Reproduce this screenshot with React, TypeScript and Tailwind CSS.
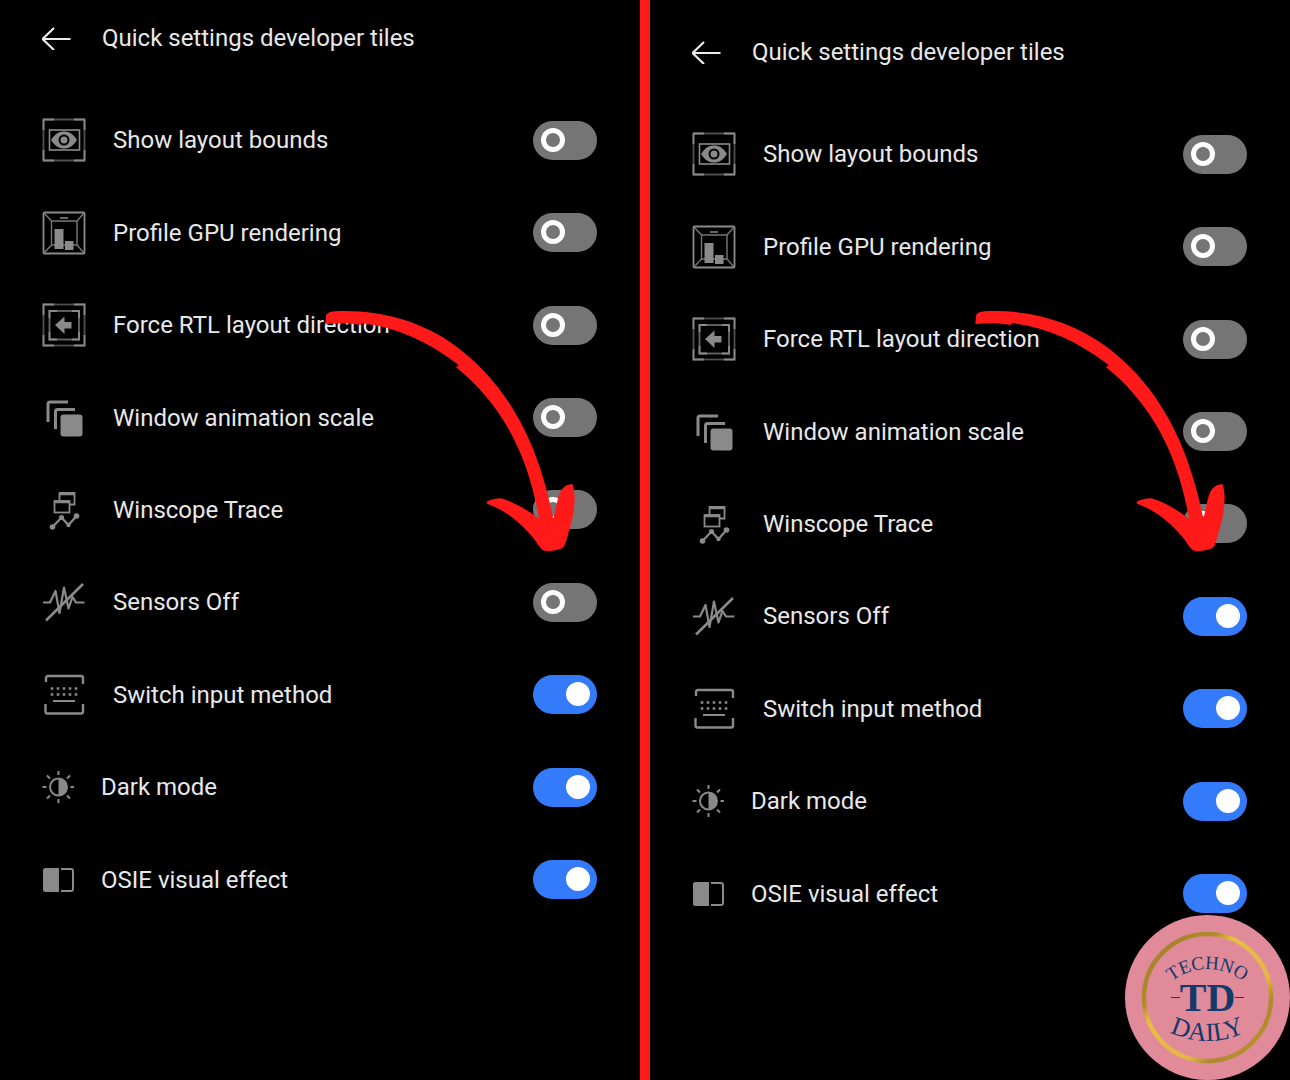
import { useId, useState } from 'react'
import type { ReactNode } from 'react'

type Tile = {
  label: string
  icon: ReactNode
  on?: boolean
}

function LayoutBoundsIcon() {
  return (
    <svg width="44" height="44" viewBox="0 0 44 44" fill="none" stroke="#8a8a8a" aria-hidden="true">
      <rect x="1.5" y="1.5" width="41" height="41" rx="1" stroke="#4f4f4f" strokeWidth="1.8" />
      <path d="M1.5 12V1.5H12M32 1.5h10.5V12M42.5 32v10.5H32M12 42.5H1.5V32" strokeWidth="1.8" />
      <rect x="7.5" y="12" width="30" height="20" strokeWidth="1.6" />
      <path d="M9 22c3.5-6 8-8.5 13-8.5s9.5 2.5 13 8.5c-3.5 6-8 8.5-13 8.5s-9.5-2.5-13-8.5z" fill="#8a8a8a" stroke="none" />
      <circle cx="22" cy="22" r="4.5" stroke="#000" strokeWidth="2" />
    </svg>
  )
}

function GpuIcon() {
  return (
    <svg width="44" height="44" viewBox="0 0 44 44" fill="none" stroke="#8a8a8a" aria-hidden="true">
      <rect x="1.5" y="1.5" width="41" height="41" rx="1" strokeWidth="1.8" />
      <path d="M9.5 34V10h25.5v24H9.5M2 2l7.5 8M42 2l-7 8M2 42l7.5-8M42 42l-7-8" stroke="#777" strokeWidth="1.4" />
      <path d="M18 7h8" stroke="#666" strokeWidth="2" />
      <path d="M12.5 18h9v20h-9zM23 30h8.5v9H23z" fill="#8a8a8a" stroke="none" />
    </svg>
  )
}

function RtlIcon() {
  return (
    <svg width="44" height="44" viewBox="0 0 44 44" fill="none" stroke="#8a8a8a" aria-hidden="true">
      <rect x="1.5" y="1.5" width="41" height="41" stroke="#4f4f4f" strokeWidth="1.8" />
      <path d="M1.5 12V1.5H12M32 1.5h10.5V12M42.5 32v10.5H32M12 42.5H1.5V32" strokeWidth="1.8" />
      <rect x="7.5" y="8" width="29.5" height="28.5" stroke="#666" strokeWidth="1.8" />
      <path d="M7.5 15V8H15M30 8h7v7M37 29v7.5h-7M15 36.5H7.5V29" strokeWidth="1.8" />
      <path d="M13 22l9.5-8.5V19h7v6.5h-7V31z" fill="#8a8a8a" stroke="none" />
    </svg>
  )
}

function WindowsIcon() {
  return (
    <svg width="44" height="44" viewBox="0 0 44 44" fill="none" stroke="#8a8a8a" strokeWidth="3" aria-hidden="true">
      <path d="M6 26V8a2 2 0 0 1 2-2h18M13.5 33V15.5a2 2 0 0 1 2-2h17.5" />
      <rect x="18.5" y="18.5" width="22" height="22" rx="3" fill="#8a8a8a" stroke="none" />
    </svg>
  )
}

function WinscopeIcon() {
  return (
    <svg width="44" height="44" viewBox="0 0 44 44" fill="none" stroke="#8a8a8a" strokeWidth="1.8" aria-hidden="true">
      <path d="M17.5 12V5h15v11.5H28" />
      <path d="M17.5 6h15M12.5 14h15" strokeWidth="2.6" />
      <rect x="12.5" y="13" width="15" height="11.5" />
      <path d="M10.5 39l9-9.5 7 7.5 8-9" strokeWidth="2.2" />
      <g fill="#8a8a8a" stroke="none">
        <circle cx="10.5" cy="39" r="2.8" />
        <circle cx="19.5" cy="29.5" r="2.6" />
        <circle cx="26.5" cy="37" r="2.2" />
        <circle cx="34.5" cy="28" r="2.8" />
      </g>
    </svg>
  )
}

function SensorsIcon() {
  return (
    <svg
      width="44"
      height="44"
      viewBox="0 0 44 44"
      fill="none"
      stroke="#8a8a8a"
      strokeWidth="2.2"
      strokeLinejoin="round"
      aria-hidden="true"
    >
      <path d="M1 22.5h7L13.5 11l4 22 4.5-25.5 4.5 21L30.5 17l3.5 5.5h8.5" />
      <path d="M4 40.5L41 4" strokeWidth="2.6" />
    </svg>
  )
}

function KeyboardIcon() {
  return (
    <svg width="44" height="44" viewBox="0 0 44 44" fill="none" stroke="#8a8a8a" strokeWidth="2.4" aria-hidden="true">
      <path d="M4 9V5a2 2 0 0 1 2-2h33a2 2 0 0 1 2 2v6M3.5 31v7.5a2 2 0 0 0 2 2h33.5a2 2 0 0 0 2-2V31" />
      <path d="M8.7 15.5h27M8.7 21.5h27" strokeWidth="2.6" strokeDasharray="2.6 3.4" />
      <path d="M11 28h22" strokeWidth="2" />
    </svg>
  )
}

function DarkModeIcon() {
  return (
    <svg width="32" height="32" viewBox="0 0 32 32" fill="none" stroke="#8a8a8a" strokeWidth="2" aria-hidden="true">
      <circle cx="16.5" cy="16" r="8.5" />
      <path d="M16.5 7.5a8.5 8.5 0 0 1 0 17z" fill="#8a8a8a" stroke="none" />
      <path d="M16.5 0v4M16.5 28v4M0.5 16h4M28.5 16h3.5M5 4.5l3 3M25 24.5l3 3M5 27.5l3-3M25 7.5l3-3" />
    </svg>
  )
}

function OsieIcon() {
  return (
    <svg width="32" height="32" viewBox="0 0 32 32" fill="none" aria-hidden="true">
      <path d="M3.5 4h13.5v24H3.5A2.5 2.5 0 0 1 1 25.5v-19A2.5 2.5 0 0 1 3.5 4z" fill="#8a8a8a" />
      <path d="M19 5h10a2 2 0 0 1 2 2v18a2 2 0 0 1-2 2H19" stroke="#8a8a8a" strokeWidth="2" />
    </svg>
  )
}

const tiles: Tile[] = [
  { label: 'Show layout bounds', icon: <LayoutBoundsIcon /> },
  { label: 'Profile GPU rendering', icon: <GpuIcon /> },
  { label: 'Force RTL layout direction', icon: <RtlIcon /> },
  { label: 'Window animation scale', icon: <WindowsIcon /> },
  { label: 'Winscope Trace', icon: <WinscopeIcon /> },
  { label: 'Sensors Off', icon: <SensorsIcon /> },
  { label: 'Switch input method', icon: <KeyboardIcon />, on: true },
  { label: 'Dark mode', icon: <DarkModeIcon />, on: true },
  { label: 'OSIE visual effect', icon: <OsieIcon />, on: true },
]

function TileRow({ label, icon, on = false }: Tile) {
  const id = useId()
  const [checked, setChecked] = useState(on)

  return (
    <li className="flex flex-1 items-center gap-[27px]">
      {icon}
      <label htmlFor={id} className="flex-1">
        {label}
      </label>
      <span className="relative flex">
        <input
          id={id}
          type="checkbox"
          role="switch"
          checked={checked}
          onChange={(e) => setChecked(e.target.checked)}
          className="peer h-[39px] w-16 cursor-pointer appearance-none rounded-full bg-[#757575] checked:bg-[#337bfb]"
        />
        <span className="pointer-events-none absolute top-[7px] left-2 size-6 rounded-full border-[5px] border-white peer-checked:left-[33px] peer-checked:bg-white" />
      </span>
    </li>
  )
}

function PointerArrow() {
  return (
    <svg
      className="pointer-events-none absolute top-[300px] right-[30px]"
      width="300"
      height="270"
      viewBox="0 0 900 810"
      fill="#ff1919"
      aria-hidden="true"
    >
      <path d="M48 48C50 39 58 36 75 34C210 28 332 62 440 140C566 236 677 385 730 657L738 622C744 594 748 577 757 566C765 557 775 553 787 552C791 562 793 573 794 590C794 622 789 650 782 675C775 700 771 720 763 738C759 745 748 749 738 750C725 753 708 755 697 750C686 740 678 723 665 708C645 685 625 665 600 647C575 630 555 620 532 611L529 606C542 599 557 595 573 595C612 606 650 628 687 656C650 440 560 300 437 200L446 198L442 192C350 123 255 80 155 70L152 75C120 68 80 69 46 72Z" />
    </svg>
  )
}

function Panel({ tiles, className }: { tiles: Tile[]; className: string }) {
  return (
    <section className={`relative flex min-h-screen flex-1 flex-col pr-[43px] pl-[42px] ${className}`}>
      <header className="flex h-[52px] items-center gap-[30px]">
        <button type="button" aria-label="Back">
          <svg width="30" height="24" viewBox="0 0 30 24" fill="none" stroke="#ececec" strokeWidth="2.2">
            <path d="M0.5 13h28M12 2L0.5 13L12 24" />
          </svg>
        </button>
        <h1>Quick settings developer tiles</h1>
      </header>
      <ul className="mt-[30px] flex flex-1 flex-col">
        {tiles.map((tile) => (
          <TileRow key={tile.label} {...tile} />
        ))}
      </ul>
      <PointerArrow />
    </section>
  )
}

function Logo() {
  return (
    <svg
      className="absolute right-0 bottom-0 font-['Liberation_Serif',serif]"
      width="165"
      height="165"
      viewBox="0 0 165 165"
      fill="#143a6b"
      textAnchor="middle"
    >
      <defs>
        <linearGradient id="gold" x1="0" y1="0" x2="1" y2="1">
          <stop offset="0.15" stopColor="#a8842c" />
          <stop offset="0.28" stopColor="#b08a2e" />
          <stop offset="0.36" stopColor="#e8bd45" />
          <stop offset="0.66" stopColor="#e4b843" />
          <stop offset="0.76" stopColor="#ad882d" />
          <stop offset="0.9" stopColor="#b8922f" />
        </linearGradient>
        <path id="arc-top" d="M25.5 111a57 57 0 0 1 114 0" />
        <path id="arc-bottom" d="M-3.5 40a86 86 0 0 0 172 0" />
      </defs>
      <circle cx="82.5" cy="82.5" r="82.5" fill="#e08a9a" />
      <circle cx="82.5" cy="82.5" r="63.5" fill="none" stroke="url(#gold)" strokeWidth="4.5" />
      <text fontSize="19">
        <textPath href="#arc-top" startOffset="50%">
          TECHNO
        </textPath>
      </text>
      <text x="82.5" y="96" fontSize="40" fontWeight="700">
        TD
      </text>
      <path d="M46 82.5h9M110 82.5h9" stroke="#143a6b" strokeWidth="1" />
      <text fontSize="26">
        <textPath href="#arc-bottom" startOffset="50%">
          DAILY
        </textPath>
      </text>
    </svg>
  )
}

export default function App() {
  const after = tiles.map((tile) => (tile.label === 'Sensors Off' ? { ...tile, on: true } : tile))

  return (
    <main className="relative flex min-h-screen bg-black font-['Roboto',sans-serif] text-2xl leading-7 text-[#e8e8e8]">
      <Panel tiles={tiles} className="pt-3 pb-[154px]" />
      <div className="w-2.5 bg-[#ff1919]" />
      <Panel tiles={after} className="pt-[26px] pb-[140px]" />
      <Logo />
    </main>
  )
}
